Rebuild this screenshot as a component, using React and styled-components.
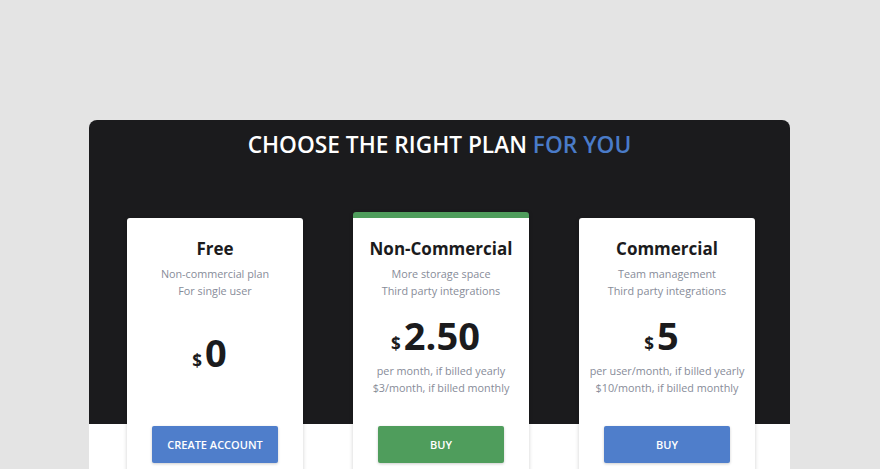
import styled, { createGlobalStyle } from "styled-components"

const GlobalStyle = createGlobalStyle`
body {
  margin: 0;
  background: #e4e4e4;
  font-family: "Open Sans", "Liberation Sans", sans-serif;
}
`

const plans = [
    {
        name: "Free",
        desc: ["Non-commercial plan", "For single user"],
        price: "0",
        notes: [],
        action: "CREATE ACCOUNT",
        tone: "blue",
    },
    {
        name: "Non-Commercial",
        desc: ["More storage space", "Third party integrations"],
        price: "2.50",
        notes: ["per month, if billed yearly", "$3/month, if billed monthly"],
        action: "BUY",
        tone: "green",
        featured: true,
    },
    {
        name: "Commercial",
        desc: ["Team management", "Third party integrations"],
        price: "5",
        notes: ["per user/month, if billed yearly", "$10/month, if billed monthly"],
        action: "BUY",
        tone: "blue",
    },
]

export default function App() {
    return (
        <>
            <GlobalStyle />
            <Panel>
                <Title>
                    CHOOSE THE RIGHT PLAN <span>FOR YOU</span>
                </Title>
                <Cards>
                    {plans.map((p) => (
                        <Card key={p.name} $featured={p.featured}>
                            <Name>{p.name}</Name>
                            <Desc>
                                {p.desc.map((d) => (
                                    <div key={d}>{d}</div>
                                ))}
                            </Desc>
                            <PriceArea>
                                <Price>
                                    <small>$</small>
                                    {p.price}
                                </Price>
                                {p.notes.map((n) => (
                                    <Note key={n}>{n}</Note>
                                ))}
                            </PriceArea>
                            <Button $tone={p.tone}>{p.action}</Button>
                        </Card>
                    ))}
                </Cards>
            </Panel>
        </>
    )
}

const Panel = styled.div`
width: 701px;
margin: 120px 0 0 89px;
padding-top: 10px;
border-radius: 8px 8px 0 0;
background: linear-gradient(to bottom, #1b1b1d 0, #1b1b1d 304px, #ffffff 304px);
height: 400px;
box-sizing: border-box;
`

const Title = styled.h1`
margin: 0;
text-align: center;
color: #ffffff;
font-size: 22.7px;
line-height: 30px;
font-weight: 600;
span {
    color: #4a7bc8;
}
`

const Cards = styled.div`
display: flex;
align-items: flex-start;
gap: 50px;
margin-top: 58px;
padding-left: 38px;
`

const Card = styled.div`
width: 176px;
background: #ffffff;
border-radius: 3px;
box-shadow: 0 1px 4px rgba(0, 0, 0, 0.18);
padding-top: 18px;
text-align: center;
display: flex;
flex-direction: column;
align-items: center;
height: 260px;
${(p) => p.$featured && `
    border-top: 6px solid #4f9d5c;
    margin-top: -6px;
`}
`

const Name = styled.div`
font-size: 17px;
line-height: 26px;
font-weight: 700;
color: #1b1b1d;
`

const Desc = styled.div`
margin-top: 3px;
font-size: 10.8px;
line-height: 17px;
color: #878c99;
`

const PriceArea = styled.div`
height: 106px;
padding-top: 4px;
display: flex;
flex-direction: column;
justify-content: center;
`

const Price = styled.div`
font-size: 38px;
line-height: 36px;
font-weight: 700;
color: #1b1b1d;
padding-right: 11px;
small {
    font-size: 17px;
    margin-right: 3px;
}
`

const Note = styled.div`
font-size: 10.8px;
line-height: 17px;
color: #878c99;
`

const Button = styled.div`
margin-top: 17px;
width: 126px;
height: 37px;
display: flex;
align-items: center;
justify-content: center;
border-radius: 2px;
color: #ffffff;
font-size: 11px;
font-weight: 600;
background: ${(p) => (p.$tone === "green" ? "#4f9d5c" : "#4f7ecb")};
box-shadow: 0 1px 3px rgba(0, 0, 0, 0.2);
`
